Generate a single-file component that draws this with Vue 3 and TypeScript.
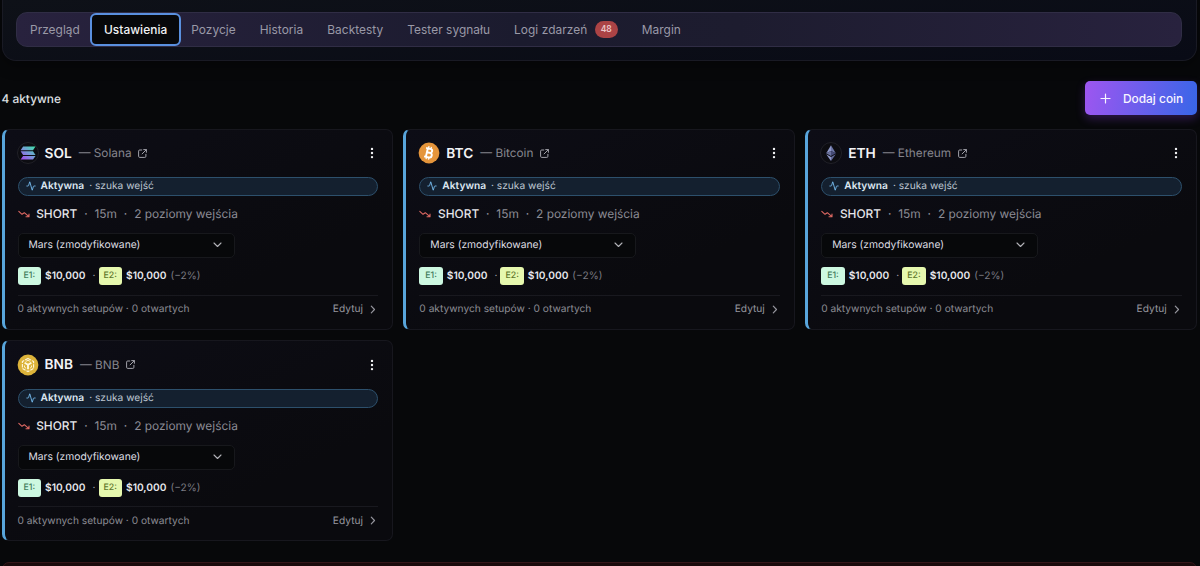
<script setup lang="ts">
interface Coin {
  symbol: string
  name: string
}

interface Tab {
  label: string
  active?: boolean
  count?: number
}

const tabs: Tab[] = [
  { label: 'Przegląd' },
  { label: 'Ustawienia', active: true },
  { label: 'Pozycje' },
  { label: 'Historia' },
  { label: 'Backtesty' },
  { label: 'Tester sygnału' },
  { label: 'Logi zdarzeń', count: 48 },
  { label: 'Margin' },
]

const coins: Coin[] = [
  { symbol: 'SOL', name: 'Solana' },
  { symbol: 'BTC', name: 'Bitcoin' },
  { symbol: 'ETH', name: 'Ethereum' },
  { symbol: 'BNB', name: 'BNB' },
]
</script>

<template>
  <main class="page">
    <header class="panel">
      <nav class="tabs">
        <button v-for="t in tabs" :key="t.label" class="tab" :class="{ active: t.active }">
          {{ t.label }}<span v-if="t.count" class="count">{{ t.count }}</span>
        </button>
      </nav>
    </header>

    <div class="toolbar">
      <span class="total">4 aktywne</span>
      <button class="add">
        <svg width="11" height="11" viewBox="0 0 11 11" fill="none" stroke="currentColor" stroke-width="1.2" stroke-linecap="round"><path d="M5.5 1v9M1 5.5h9" /></svg>
        <span>Dodaj coin</span>
      </button>
    </div>

    <section class="grid">
      <article v-for="c in coins" :key="c.symbol" class="card">
        <div class="head">
          <svg v-if="c.symbol === 'SOL'" class="logo" viewBox="0 0 22 22">
            <defs>
              <linearGradient id="sol" gradientUnits="userSpaceOnUse" x1="17" y1="4" x2="6" y2="18">
                <stop offset="0" stop-color="#3fe0ac" />
                <stop offset="0.5" stop-color="#769ad8" />
                <stop offset="1" stop-color="#a14bed" />
              </linearGradient>
            </defs>
            <circle cx="11" cy="11" r="10.5" fill="#0c0c11" stroke="#202027" />
            <g fill="url(#sol)">
              <path d="M6.1 4.5h12.4L16 8.2H3.6z" />
              <path d="M3.6 9.2H16l2.5 3.7H6.1z" />
              <path d="M6.1 13.9h12.4L16 17.6H3.6z" />
            </g>
          </svg>
          <svg v-else-if="c.symbol === 'BTC'" class="logo" viewBox="0 0 22 22">
            <circle cx="11" cy="11" r="10.4" fill="#e5953b" />
            <g transform="rotate(13 11 11)" fill="none" stroke="#fff">
              <path d="M8.8 6.6v8.8M7 6.6h4.4c3 0 3 4.1 0 4.1H8.8h3c3.3 0 3.3 4.7 0 4.7H7" stroke-width="1.9" />
              <path d="M9.5 4.4v2.2M12 4.4v2.2M9.5 15.4v2.2M12 15.4v2.2" stroke-width="1.2" />
            </g>
          </svg>
          <svg v-else-if="c.symbol === 'ETH'" class="logo" viewBox="0 0 22 22">
            <circle cx="11" cy="11" r="10.5" fill="#0c0c11" stroke="#202027" />
            <path d="M11 3.2 6.2 11.2 11 9.1z" fill="#8f98c8" />
            <path d="M11 3.2 15.8 11.2 11 9.1z" fill="#6c75a5" />
            <path d="M6.2 11.2 11 9.1v5z" fill="#6a719d" />
            <path d="M15.8 11.2 11 9.1v5z" fill="#454b77" />
            <path d="M6.2 12.2 11 15.1v3.8z" fill="#8f98c8" />
            <path d="M15.8 12.2 11 15.1v3.8z" fill="#626a99" />
          </svg>
          <svg v-else class="logo" viewBox="0 0 22 22">
            <circle cx="11" cy="11" r="10.4" fill="#dcb33a" />
            <g fill="none" stroke="#fff8df" stroke-width="1.1" stroke-linejoin="round">
              <path d="M11 4.4 16.6 7.6v6.8L11 17.6 5.4 14.4V7.6z" stroke-dasharray="3.5 1" />
              <path d="M7.6 8.8 11 10.8l3.4-2M11 10.8v4.4" stroke-width="1.9" />
              <path d="M8.8 7.4 11 6.3l2.2 1.1M7.5 11.5v1.7l1.6 1M14.5 11.5v1.7l-1.6 1" stroke-width="0.9" />
            </g>
          </svg>
          <h2>{{ c.symbol }}</h2>
          <span class="name">— {{ c.name }}</span>
          <svg class="ext" width="9" height="9" viewBox="0 0 9 9" fill="none" stroke="currentColor" stroke-width="1" stroke-linecap="round" stroke-linejoin="round"><path d="M3.8 1H1.7Q.6 1 .6 2.1v5.2q0 1.1 1.1 1.1h5.1q1.1 0 1.1-1.1V5.3M5.7.6h2.7v2.7M8.3.7 4.1 4.9" /></svg>
          <svg class="more" width="4" height="12" viewBox="0 0 4 12" fill="#f2f3f5"><circle cx="2" cy="1.9" r="1.2" /><circle cx="2" cy="6" r="1.2" /><circle cx="2" cy="10.1" r="1.2" /></svg>
        </div>

        <div class="status">
          <svg width="10" height="10" viewBox="0 0 24 24" fill="none" stroke="#72b5e6" stroke-width="2.3" stroke-linecap="round" stroke-linejoin="round"><path d="M22 12h-2.5a2 2 0 0 0-1.9 1.5l-2.4 8.3a.25.25 0 0 1-.5 0L9.2 2.2a.25.25 0 0 0-.5 0L6.4 10.5A2 2 0 0 1 4.5 12H2" /></svg>
          <b>Aktywna</b><span>· szuka wejść</span>
        </div>

        <div class="mode">
          <svg width="12" height="8" viewBox="0 0 12 8" fill="none" stroke="#dc6862" stroke-width="1.1" stroke-linecap="round" stroke-linejoin="round"><path d="M.8 1.3 4 4.3 6.3 2.7 10.9 6.7M8 6.8h3V4" /></svg>
          <b>SHORT</b><i>·</i><span>15m</span><i>·</i><span>2 poziomy wejścia</span>
        </div>

        <div class="select">
          <span>Mars (zmodyfikowane)</span>
          <svg width="9" height="6" viewBox="0 0 9 6" fill="none" stroke="#b2b2b8" stroke-width="1.1" stroke-linecap="round" stroke-linejoin="round"><path d="M1 1l3.5 3.5L8 1" /></svg>
        </div>

        <div class="entries">
          <span class="tag green">E1:</span><b>$10,000</b><i>·</i><span class="tag lime">E2:</span><b>$10,000</b><span class="pct">(−2%)</span>
        </div>

        <footer class="foot">
          <span>0 aktywnych setupów · 0 otwartych</span>
          <a class="edit">Edytuj<svg width="6" height="9" viewBox="0 0 6 9" fill="none" stroke="currentColor" stroke-width="1.2" stroke-linecap="round" stroke-linejoin="round"><path d="M1.3 1.2l3.2 3.3-3.2 3.3" /></svg></a>
        </footer>
      </article>
    </section>

    <section class="danger"></section>
  </main>
</template>

<style>
html,
body {
  margin: 0;
  background: #07080a;
  overflow: hidden;
}
</style>

<style scoped>
* {
  box-sizing: border-box;
}
.page {
  height: 566px;
  padding: 0 3.5px 0 1.5px;
  overflow: hidden;
  font-family: Inter, "Liberation Sans", sans-serif;
  text-rendering: geometricPrecision;
  color: #e8e9ec;
  background: #07080a;
}
button {
  font: inherit;
  border: 0;
  margin: 0;
}
.panel {
  height: 61px;
  padding: 12px 14px 0;
  border: 1px solid #191a24;
  border-top: 0;
  border-radius: 0 0 14px 14px;
  background: linear-gradient(175deg, #0e1118, #090b16);
  box-shadow: 0 5px 14px rgba(0, 0, 0, 0.35);
}
.tabs {
  display: flex;
  height: 35px;
  width: 1166px;
  margin-left: -0.5px;
  padding: 0 1px;
  align-items: center;
  border: 1px solid #302d45;
  border-radius: 11px;
  background: linear-gradient(90deg, #28223e, #1b1b2e 43%, #1d1c2f 62%, #28223e);
}
.tab {
  display: flex;
  align-items: center;
  height: 33px;
  padding: 0 12px;
  background: none;
  color: #9a99a7;
  font-size: 11.9px;
  font-weight: 400;
  letter-spacing: 0.05px;
  white-space: nowrap;
}
.tab.active {
  margin: 0 -1.5px;
  padding: 0 11.5px;
  border: 2px solid #5a90df;
  border-radius: 6px;
  background: #07080a;
  color: #f2f3f5;
  font-weight: 500;
}
.count {
  margin-left: 7.5px;
  width: 23px;
  height: 17px;
  line-height: 17px;
  border-radius: 9px;
  text-align: center;
  background: #ab4345;
  color: #ecc6c8;
  font-size: 8.5px;
  font-weight: 600;
}
.toolbar {
  display: flex;
  justify-content: space-between;
  align-items: center;
  height: 34px;
  margin: 20px 0 13.6px;
}
.total {
  font-size: 11.9px;
  font-weight: 500;
  color: #dfe0e4;
}
.add {
  display: flex;
  align-items: center;
  gap: 12px;
  width: 111.5px;
  height: 34px;
  padding: 0 0 0 15px;
  border-radius: 5px;
  background: linear-gradient(100deg, #9e56f0, #3866e8);
  box-shadow: 0 4px 10px rgba(132, 60, 220, 0.3);
  color: #f7f5ff;
  font-size: 11.9px;
  font-weight: 500;
  white-space: nowrap;
}
.grid {
  display: grid;
  grid-template-columns: repeat(3, 1fr);
  gap: 10.4px 10.6px;
}
.card {
  height: 201.2px;
  min-width: 0;
  padding: 12.6px 13.4px 0 13px;
  border: 1px solid #17171e;
  border-left: 3px solid #58a5db;
  border-radius: 7px;
  background: linear-gradient(155deg, #0d0d16, #0a0a0e 70%);
}
.head {
  display: flex;
  align-items: center;
  height: 22px;
}
.logo {
  width: 22px;
  height: 22px;
  margin-left: -1px;
}
h2 {
  margin: 1px 0 0 6px;
  font-size: 13.7px;
  font-weight: 600;
  color: #f3f3f5;
}
.name {
  margin-left: 7px;
  font-size: 11.8px;
  color: #85858d;
}
.ext {
  margin-left: 6.5px;
  color: #a2a2aa;
}
.more {
  margin-left: auto;
  margin-right: 4.6px;
}
.status {
  display: flex;
  align-items: center;
  height: 19px;
  margin-top: 12.8px;
  padding-left: 7px;
  border: 1px solid #2d506c;
  border-radius: 10px;
  background: #14202f;
  font-size: 10.2px;
  color: #bcc5cf;
}
.status b {
  margin: 0 5px 0 5px;
  font-weight: 600;
  color: #dce7f1;
}
.mode {
  display: flex;
  align-items: center;
  height: 16px;
  margin-top: 10px;
  font-size: 11.9px;
  color: #8c8c95;
}
.mode b {
  margin-left: 6.7px;
  font-weight: 500;
  color: #e6e6ea;
}
.mode i {
  width: 17.2px;
  text-align: center;
  font-style: normal;
}
.select {
  display: flex;
  align-items: center;
  justify-content: space-between;
  width: 217px;
  height: 25px;
  margin-top: 11px;
  padding: 0 12px 0 10px;
  border: 1px solid #17181c;
  border-radius: 5px;
  background: #07080a;
  font-size: 10.3px;
  font-weight: 400;
  color: #dedee3;
}
.entries {
  display: flex;
  align-items: center;
  height: 18px;
  margin-top: 9px;
  font-size: 10.2px;
}
.tag {
  width: 23.5px;
  height: 18px;
  line-height: 18px;
  border-radius: 3px;
  text-align: center;
  font-size: 8.8px;
  font-weight: 500;
}
.green {
  background: #cdf8e1;
  color: #417b5b;
}
.lime {
  background: #e6f8ae;
  color: #5e752b;
}
.entries b {
  margin-left: 4px;
  font-weight: 600;
  color: #e9e9ee;
}
.entries i {
  width: 13px;
  padding-left: 4px;
  text-align: center;
  font-style: normal;
  color: #9a9aa2;
}
.pct {
  margin-left: 4px;
  color: #7b7b83;
}
.foot {
  display: flex;
  justify-content: space-between;
  align-items: center;
  height: 28px;
  margin-top: 9.8px;
  border-top: 1px solid #19191f;
  font-size: 10.2px;
  color: #8b8b93;
}
.edit {
  display: flex;
  align-items: center;
  gap: 7px;
  padding-right: 2.4px;
  color: #96969e;
}
.danger {
  height: 20px;
  margin-top: 20.6px;
  border: 1px solid #35161a;
  border-radius: 7px;
  background: #1a0a0c;
}
</style>
